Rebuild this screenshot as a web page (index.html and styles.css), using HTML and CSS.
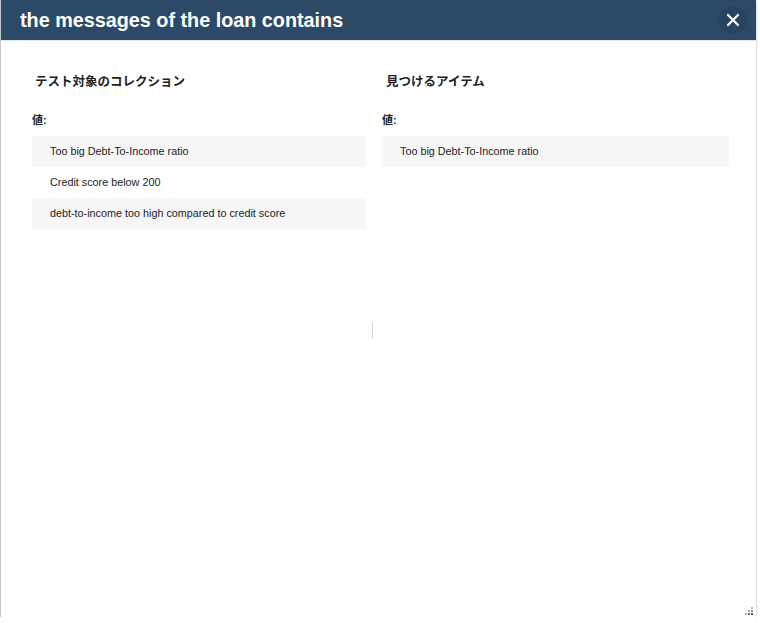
FILE: index.html
```html
<!DOCTYPE html>
<html>
<head>
<meta charset="utf-8">
<link rel="stylesheet" href="styles.css">
</head>
<body>
<div class="dialog">
  <div class="header">
    <h1 class="title">the messages of the loan contains</h1>
    <button class="close" aria-label="close">
      <svg width="14" height="14" viewBox="0 0 14 14"><path d="M2 2 L12 12 M12 2 L2 12" stroke="#fff" stroke-width="2.2" stroke-linecap="round"/></svg>
    </button>
  </div>
  <div class="body">
    <div class="col left">
      <h2 class="col-title">テスト対象のコレクション</h2>
      <div class="label">値:</div>
      <ul class="list">
        <li class="row alt">Too big Debt-To-Income ratio</li>
        <li class="row">Credit score below 200</li>
        <li class="row alt">debt-to-income too high compared to credit score</li>
      </ul>
    </div>
    <div class="divider"><span class="handle"></span></div>
    <div class="col right">
      <h2 class="col-title">見つけるアイテム</h2>
      <div class="label">値:</div>
      <ul class="list">
        <li class="row alt">Too big Debt-To-Income ratio</li>
      </ul>
    </div>
  </div>
  <div class="grip">
    <svg width="8" height="8" viewBox="0 0 8 8">
      <rect x="6" y="0" width="2" height="2" fill="#bbb"/>
      <rect x="3" y="3" width="2" height="2" fill="#aaa"/>
      <rect x="6" y="3" width="2" height="2" fill="#888"/>
      <rect x="0" y="6" width="2" height="2" fill="#aaa"/>
      <rect x="3" y="6" width="2" height="2" fill="#666"/>
      <rect x="6" y="6" width="2" height="2" fill="#555"/>
    </svg>
  </div>
</div>
</body>
</html>
```

FILE: styles.css
```css
html, body {
  margin: 0;
  padding: 0;
  background: #ffffff;
  font-family: "Liberation Sans", Arial, "Noto Sans CJK JP", sans-serif;
}

.dialog {
  position: relative;
  margin-left: 1px;
  width: 755px;
  height: 617px;
  background: #fff;
  box-shadow: -1px 0 0 #c8c8c8, 0 2px 2px rgba(0, 0, 0, 0.35);
  display: flex;
  flex-direction: column;
}

.header {
  height: 41px;
  background: #2c4a67;
  border-bottom: 1px solid #dfe5ec;
  display: flex;
  align-items: center;
  justify-content: space-between;
  padding: 0 9px 0 19px;
  box-sizing: border-box;
}

.title {
  margin: 0;
  color: #fff;
  font-size: 19.8px;
  font-weight: bold;
  font-family: "Liberation Sans", Arial, sans-serif;
  line-height: 24px;
}

.close {
  width: 28px;
  height: 28px;
  border-radius: 50%;
  border: none;
  background: #284360;
  display: flex;
  align-items: center;
  justify-content: center;
  padding: 0;
}

.body {
  flex: 1;
  display: grid;
  grid-template-columns: 334px 16px 347px;
  padding-left: 31px;
}

.col-title {
  margin: 31px 0 0 3px;
  font-size: 12.5px;
  font-weight: bold;
  font-family: "Noto Sans CJK JP", sans-serif;
  line-height: 18px;
  color: #222;
}

.right .col-title {
  margin-left: 4px;
}

.label {
  margin-top: 22px;
  font-size: 11px;
  font-weight: bold;
  font-family: "Liberation Sans", "Noto Sans CJK JP", sans-serif;
  line-height: 16px;
  color: #222;
}

.list {
  list-style: none;
  margin: 8px 0 0 0;
  padding: 0;
}

.row {
  height: 31px;
  line-height: 31px;
  padding-left: 18px;
  font-size: 10.8px;
  color: #222;
}

.row.alt {
  background: #f7f7f7;
}

.divider {
  display: flex;
  justify-content: center;
  align-items: flex-start;
}

.handle {
  margin-top: 281px;
  width: 1px;
  height: 17px;
  background: #cfd6e0;
  margin-left: -4px;
}

.grip {
  position: absolute;
  right: 3px;
  bottom: 2px;
  width: 8px;
  height: 8px;
  line-height: 0;
}
```
